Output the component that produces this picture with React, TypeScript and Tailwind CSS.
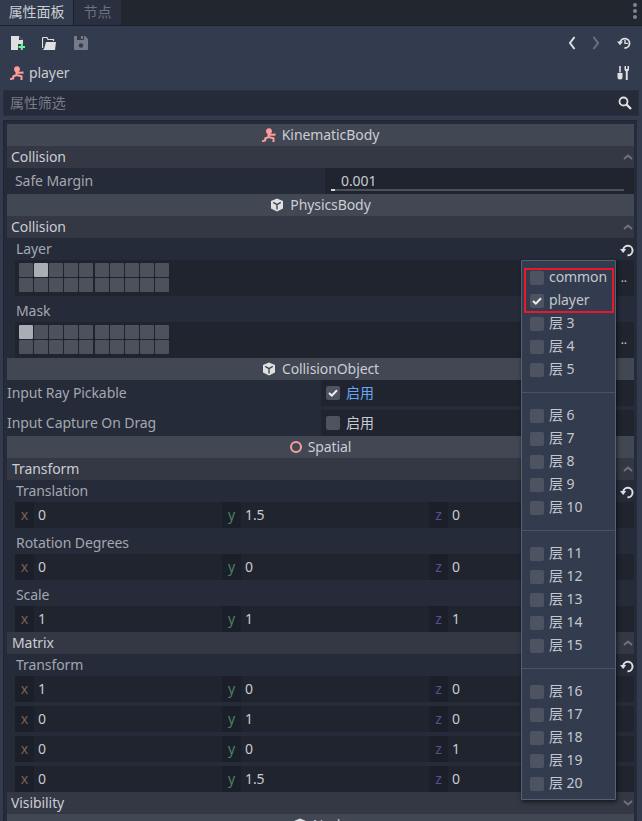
import type { ReactNode } from "react";

const FONT = "font-['Noto_Sans','Noto_Sans_CJK_SC',sans-serif] tracking-[-0.08px]";

function KinematicIcon() {
  return (
    <svg width="14" height="14" viewBox="0 0 14 14" fill="none" stroke="#fc9c9c" strokeWidth="2">
      <circle cx="7" cy="3.200" r="2.900" fill="#fc9c9c" stroke="none" />
      <path d="M6.500 5v4M6.500 6.800h6V5.500M6.500 9L3.200 10.500V12.500L0 13.200M6.500 9L11.500 10.200V14" />
    </svg>
  );
}

function CubeIcon() {
  return (
    <svg width="14" height="14" viewBox="0 0 14 14">
      <path d="M7 0.500l6 2.500v7.500L7 13.500l-6-3V3z" fill="#e0e0e0" />
      <path d="M7 6.600L3.200 4.400M7 6.600l3.800-2.200M7 6.600v5" stroke="#414753" strokeWidth="1.400" fill="none" />
    </svg>
  );
}

function RevertIcon() {
  return (
    <svg width="14" height="14" viewBox="0 0 14 14" fill="none">
      <path d="M3.200 6.800A4.700 4.700 0 1 1 7.500 12.200" stroke="#e0e0e0" strokeWidth="2" />
      <path d="M0 6h6.200L3.200 10z" fill="#e0e0e0" />
    </svg>
  );
}

function Chevron({ down }: { down?: boolean }) {
  return (
    <svg width="10" height="6" viewBox="0 0 10 6" fill="none" className="absolute right-[1px] top-[8px]">
      <path d={down ? "M1 1l4 3.500L9 1" : "M1 5l4-3.500L9 5"} stroke="#6d727c" strokeWidth="2" />
    </svg>
  );
}

function Header({ icon, title }: { icon: ReactNode; title: string }) {
  return (
    <div className="flex h-[22px] items-center justify-center gap-[6px] bg-[#414753] text-[14px] text-[#cbcdd3]">
      {icon}
      <span className="pb-[2px]">{title}</span>
    </div>
  );
}

function Section({ title, down, indent }: { title: string; down?: boolean; indent?: boolean }) {
  return (
    <div className={`relative flex h-[22px] items-center bg-[#333844] text-[14px] text-[#cbcdd3] ${indent ? "pl-[5px]" : "pl-[4px]"}`}>
      <span className="pb-[2px]">{title}</span>
      <Chevron down={down} />
    </div>
  );
}

function Label({ text, revert }: { text: string; revert?: boolean }) {
  return (
    <div className="relative flex h-[22px] items-center pl-[9px] text-[14px] text-[#a4a7ae]">
      <span className="pb-[2px]">{text}</span>
      {revert && (
        <span className="absolute right-0 top-[5px]">
          <RevertIcon />
        </span>
      )}
    </div>
  );
}

function Axis({ axis, value, color, wide }: { axis: string; value: string; color: string; wide?: boolean }) {
  return (
    <div className={`flex h-[26px] bg-[#1f242f] ${wide ? "w-[205px]" : "w-[207px]"}`}>
      <span className={`flex w-[19px] items-center justify-center bg-[#1b1f29] pb-[2px] text-[14px] ${color}`}>{axis}</span>
      <span className="flex items-center pb-[2px] pl-[4px] text-[14px] text-[#c9cbd0]">{value}</span>
    </div>
  );
}

function Vector({ x, y, z }: { x: string; y: string; z: string }) {
  return (
    <div className="ml-[8px] flex">
      <Axis axis="x" value={x} color="text-[#80614f]" />
      <Axis axis="y" value={y} color="text-[#4e8068]" />
      <Axis axis="z" value={z} color="text-[#5d4f8c]" wide />
    </div>
  );
}

function LayerCell({ on }: { on?: boolean }) {
  return <span className={`h-[14px] w-[14px] rounded-[1px] ${on ? "bg-[#a9adb4]" : "bg-[#4d515c]"}`} />;
}

function LayerGrid({ active }: { active: number }) {
  const groups = [0, 5];
  return (
    <div className="relative ml-[8px] flex h-[36px] items-start gap-[1px] bg-[#1f242f] pl-[4px] pt-[3px]">
      {groups.map((start) => (
        <div key={start} className={`grid grid-cols-5 gap-[1px] ${start ? "ml-[1px]" : ""}`}>
          {[0, 1, 2, 3, 4].map((i) => (
            <LayerCell key={i} on={start + i === active} />
          ))}
          {[0, 1, 2, 3, 4].map((i) => (
            <LayerCell key={i} />
          ))}
        </div>
      ))}
      <span className="absolute right-[7px] top-[11px] text-[12px] leading-[14px] text-[#c9cbd0]">..</span>
    </div>
  );
}

function Check({ on }: { on?: boolean }) {
  return (
    <span className="flex h-[14px] w-[14px] shrink-0 items-center justify-center rounded-[2px] bg-[#4d5361]">
      {on && (
        <svg width="10" height="8" viewBox="0 0 10 8" fill="none">
          <path d="M1 4l2.800 2.600L9 1.200" stroke="#eeeeee" strokeWidth="2" />
        </svg>
      )}
    </span>
  );
}

function BoolRow({ label, on }: { label: string; on?: boolean }) {
  return (
    <div className="flex h-[26px] text-[14px]">
      <div className="flex w-[314px] items-center text-[#a4a7ae]">
        <span className="pb-[2px]">{label}</span>
      </div>
      <div className="flex flex-1 items-center gap-[6px] bg-[#1f242f] pl-[5px]">
        <Check on={on} />
        <span className={`pb-[2px] ${on ? "text-[#6aa6f5]" : "text-[#c9cbd0]"}`}>启用</span>
      </div>
    </div>
  );
}

function PopupItem({ label, on }: { label: string; on?: boolean }) {
  return (
    <div className="flex h-[23px] items-center gap-[5px] pl-[8px] text-[14px] text-[#c3c6cd]">
      <Check on={on} />
      <span className="pb-[2px]">{label}</span>
    </div>
  );
}

function LayerPopup() {
  const groups = [
    ["common", "player", "层 3", "层 4", "层 5"],
    ["层 6", "层 7", "层 8", "层 9", "层 10"],
    ["层 11", "层 12", "层 13", "层 14", "层 15"],
    ["层 16", "层 17", "层 18", "层 19", "层 20"],
  ];
  return (
    <div className="absolute left-[521px] top-[260px] w-[95px] rounded-[1px] border border-[#5a6070] bg-[#333c4f] pb-[4px] pt-[5px] shadow-[1px_2px_4px_rgba(0,0,0,0.6)]">
      {groups.map((group, g) => (
        <div key={g}>
          {g > 0 && (
            <div className="flex h-[23px] items-center">
              <div className="h-px w-full bg-[#4b5263]" />
            </div>
          )}
          {group.map((label) => (
            <PopupItem key={label} label={label} on={label === "player"} />
          ))}
        </div>
      ))}
      <div className="absolute left-[2px] top-[7px] h-[45px] w-[90px] border-2 border-[#e8192c]" />
    </div>
  );
}

export default function App() {
  return (
    <div className={`relative h-[821px] w-[642px] overflow-hidden bg-[#333c4f] ${FONT}`}>
      {/* tab bar */}
      <div className="relative flex h-[26px] border-b border-[#1b1f29] bg-[#21262f] text-[14px]">
        <div className="flex w-[73px] items-center justify-center bg-[#333c4f] pb-[2px] text-[#cbcdd3]">属性面板</div>
        <div className="flex w-[48px] items-center justify-center border-l border-[#1b1f29] bg-[#2a3040] pb-[2px] text-[#6b7280]">节点</div>
        <svg width="4" height="16" viewBox="0 0 4 16" className="absolute right-[5px] top-[3px]" fill="#808490">
          <circle cx="2" cy="2" r="2" />
          <circle cx="2" cy="8" r="2" />
          <circle cx="2" cy="14" r="2" />
        </svg>
      </div>

      {/* toolbar */}
      <div className="flex h-[34px] items-center pl-[11px] pr-[11px]">
        <svg width="14" height="14" viewBox="0 0 14 14">
          <path d="M0 0h8l4 4v10H0z" fill="#e0e0e0" />
          <path d="M8 0v4h4" fill="#333c4f" />
          <path d="M7 8h7v6H7z" fill="#333c4f" />
          <path d="M9.800 7.500h2v2.400h2.200v2h-2.200V14h-2v-2.100H7.500v-2h2.300z" fill="#6bf5a0" />
        </svg>
        <svg width="14" height="14" viewBox="0 0 14 14" className="ml-[17px]">
          <path d="M0.500 12V2.500A1 1 0 0 1 1.500 1.500H5l1 2h5.500v1.500" fill="none" stroke="#e0e0e0" strokeWidth="1.200" />
          <path d="M4 6h10l-1 8H0.500l1.500-1z" fill="#e0e0e0" />
        </svg>
        <svg width="14" height="14" viewBox="0 0 14 14" className="ml-[18px]">
          <path d="M1 0h10l3 3v10a1 1 0 0 1-1 1H1a1 1 0 0 1-1-1V1a1 1 0 0 1 1-1z" fill="#767b87" />
          <path d="M3 0h7v4H3z" fill="#333c4f" />
          <path d="M7 0h2v3H7z" fill="#767b87" />
          <circle cx="7" cy="9.500" r="2.200" fill="#333c4f" />
        </svg>
        <div className="flex-1" />
        <svg width="8" height="14" viewBox="0 0 8 14" fill="none" stroke="#e0e0e0" strokeWidth="2">
          <path d="M6.500 1L2 7l4.500 6" />
        </svg>
        <svg width="8" height="14" viewBox="0 0 8 14" fill="none" stroke="#6b7280" strokeWidth="2" className="ml-[16px]">
          <path d="M1.500 1L6 7l-4.500 6" />
        </svg>
        <svg width="14" height="14" viewBox="0 0 14 14" fill="none" className="ml-[17px]">
          <path d="M3.200 6.500A4.700 4.700 0 1 1 7.500 12" stroke="#e0e0e0" strokeWidth="1.800" />
          <path d="M0 5.600h6L3 9.300z" fill="#e0e0e0" />
          <path d="M8 4v3.400h2.800" stroke="#e0e0e0" strokeWidth="1.400" />
        </svg>
      </div>

      {/* object row */}
      <div className="mb-[4px] flex h-[26px] items-center pl-[10px] pr-[11px] text-[14px] text-[#cbcdd3]">
        <KinematicIcon />
        <span className="ml-[5px] pb-[2px]">player</span>
        <div className="flex-1" />
        <svg width="14" height="14" viewBox="0 0 14 14" fill="#e0e0e0">
          <path d="M2.200 0h1.600v6.500H2.200zM0.500 7h5v4a2.500 2.500 0 0 1-5 0z" />
          <path d="M7.500 0h1.500v3h1.500V0H12v4l-1.300 1.500V14H8.800V5.500L7.500 4z" />
        </svg>
      </div>

      {/* filter */}
      <div className="mx-[3px] flex h-[26px] items-center justify-between border border-[#2a3040] bg-[#252b39] pl-[6px] pr-[6px] text-[14px] text-[#777c87]">
        <span className="pb-[2px]">属性筛选</span>
        <svg width="14" height="14" viewBox="0 0 14 14" fill="none" stroke="#e0e0e0">
          <circle cx="5.500" cy="5.500" r="4" strokeWidth="1.800" />
          <path d="M8.500 8.500L13 13" strokeWidth="2.400" />
        </svg>
      </div>

      {/* inspector panel */}
      <div className="ml-[3px] mr-[5px] mt-[4px] h-[701px] overflow-hidden border-l border-t border-[#20252f] bg-[#252b39] pl-[3px] pr-[3px] pt-[3px]">
        <Header icon={<KinematicIcon />} title="KinematicBody" />
        <Section title="Collision" />
        <div className="flex h-[26px] text-[14px]">
          <div className="flex w-[318px] items-center pl-[8px] text-[#a4a7ae]">
            <span className="pb-[2px]">Safe Margin</span>
          </div>
          <div className="relative flex flex-1 items-center bg-[#1f242f] pl-[16px] text-[#c9cbd0]">
            <span className="pb-[2px]">0.001</span>
            <div className="absolute bottom-[3px] left-[6px] right-[10px] h-[2px] bg-[#4d515c]">
              <div className="h-[2px] w-[4px] bg-[#d3d5d9]" />
            </div>
          </div>
        </div>

        <Header icon={<CubeIcon />} title="PhysicsBody" />
        <Section title="Collision" />
        <Label text="Layer" revert />
        <LayerGrid active={1} />
        <div className="h-[4px]" />
        <Label text="Mask" />
        <LayerGrid active={0} />

        <Header icon={<CubeIcon />} title="CollisionObject" />
        <BoolRow label="Input Ray Pickable" on />
        <div className="h-[4px]" />
        <BoolRow label="Input Capture On Drag" />

        <Header
          icon={<span className="h-[12px] w-[12px] rounded-full border-2 border-[#fc9c9c]" />}
          title="Spatial"
        />
        <Section title="Transform" indent />
        <Label text="Translation" revert />
        <Vector x="0" y="1.5" z="0" />
        <div className="h-[4px]" />
        <Label text="Rotation Degrees" />
        <Vector x="0" y="0" z="0" />
        <div className="h-[4px]" />
        <Label text="Scale" />
        <Vector x="1" y="1" z="1" />
        <Section title="Matrix" indent />
        <Label text="Transform" revert />
        <div className="flex flex-col gap-[4px]">
          <Vector x="1" y="0" z="0" />
          <Vector x="0" y="1" z="0" />
          <Vector x="0" y="0" z="1" />
          <Vector x="0" y="1.5" z="0" />
        </div>
        <Section title="Visibility" down />
        <Header icon={<CubeIcon />} title="Node" />
      </div>

      <LayerPopup />
    </div>
  );
}
